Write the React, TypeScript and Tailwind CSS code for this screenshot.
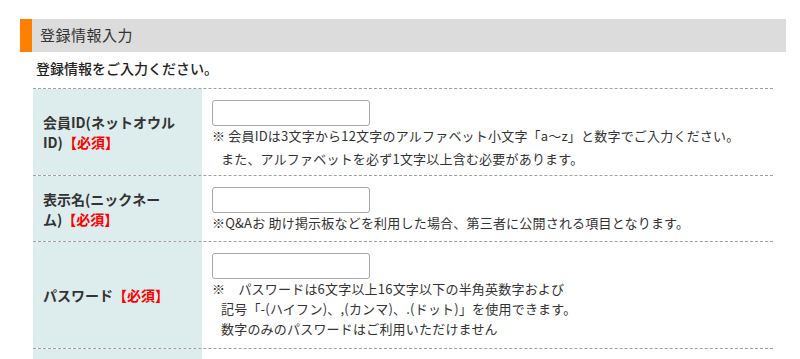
import React from "react";

const font = { fontFamily: '"Noto Sans CJK JP", "Noto Sans", sans-serif' };

const Req = () => <span className="text-[#ff0000]">【必須】</span>;

const Row = ({
  label,
  pb,
  children,
}: {
  label: React.ReactNode;
  pb: string;
  children: React.ReactNode;
}) => (
  <div className="flex border-b border-dashed border-[#a0a0a0]">
    <div className="w-[169px] shrink-0 bg-[#ddecec] px-[10px] flex items-center text-[14px] leading-[20px] font-bold text-[#333]">
      <div>{label}</div>
    </div>
    <div className={`flex-1 pl-[10px] pt-[11px] text-[13px] leading-[20px] tracking-[0.2px] text-[#333] ${pb}`}>
      <input
        type="text"
        className="block w-[158px] h-[26px] border border-[#a8a8a8] rounded-[3px] bg-white outline-none"
      />
      {children}
    </div>
  </div>
);

export default function App() {
  return (
    <div className="bg-white w-[800px] h-[359px] overflow-hidden pt-[19px] pl-[20px]" style={font}>
      <div className="w-[766px] h-[33px] bg-[#dcdcdc] flex items-center">
        <div className="w-[12px] h-full bg-[#ff8000]" />
        <div className="pl-[8px] text-[15px] text-[#333] tracking-[0.5px]">登録情報入力</div>
      </div>
      <div className="pl-[13px] w-[753px]">
        <div className="pt-[6px] pb-[10px] pl-[3px] h-[36px] text-[14px] leading-[20px] font-medium text-[#222]">
          登録情報をご入力ください。
        </div>
        <div className="border-t border-dashed border-[#a0a0a0]">
          <Row
            pb="pb-[6px]"
            label={
              <>
                会員ID(ネットオウル
                <br />
                ID)<Req />
              </>
            }
          >
            <div>※ 会員IDは3文字から12文字のアルファベット小文字「a～z」と数字でご入力ください。</div>
            <div className="pl-[9px] mt-[3px]">また、アルファベットを必ず1文字以上含む必要があります。</div>
          </Row>
          <Row
            pb="pb-[8px]"
            label={
              <>
                表示名(ニックネー
                <br />
                ム)<Req />
              </>
            }
          >
            <div>※Q&amp;Aお 助け掲示板などを利用した場合、第三者に公開される項目となります。</div>
          </Row>
          <Row
            pb="pb-[9px]"
            label={
              <>
                パスワード<Req />
              </>
            }
          >
            <div>※　パスワードは6文字以上16文字以下の半角英数字および</div>
            <div className="pl-[9px]">記号「-(ハイフン)、,(カンマ)、.(ドット)」を使用できます。</div>
            <div className="pl-[9px]">数字のみのパスワードはご利用いただけません</div>
          </Row>
          <div className="flex h-[40px]">
            <div className="w-[169px] shrink-0 bg-[#ddecec]" />
            <div className="flex-1" />
          </div>
        </div>
      </div>
    </div>
  );
}
